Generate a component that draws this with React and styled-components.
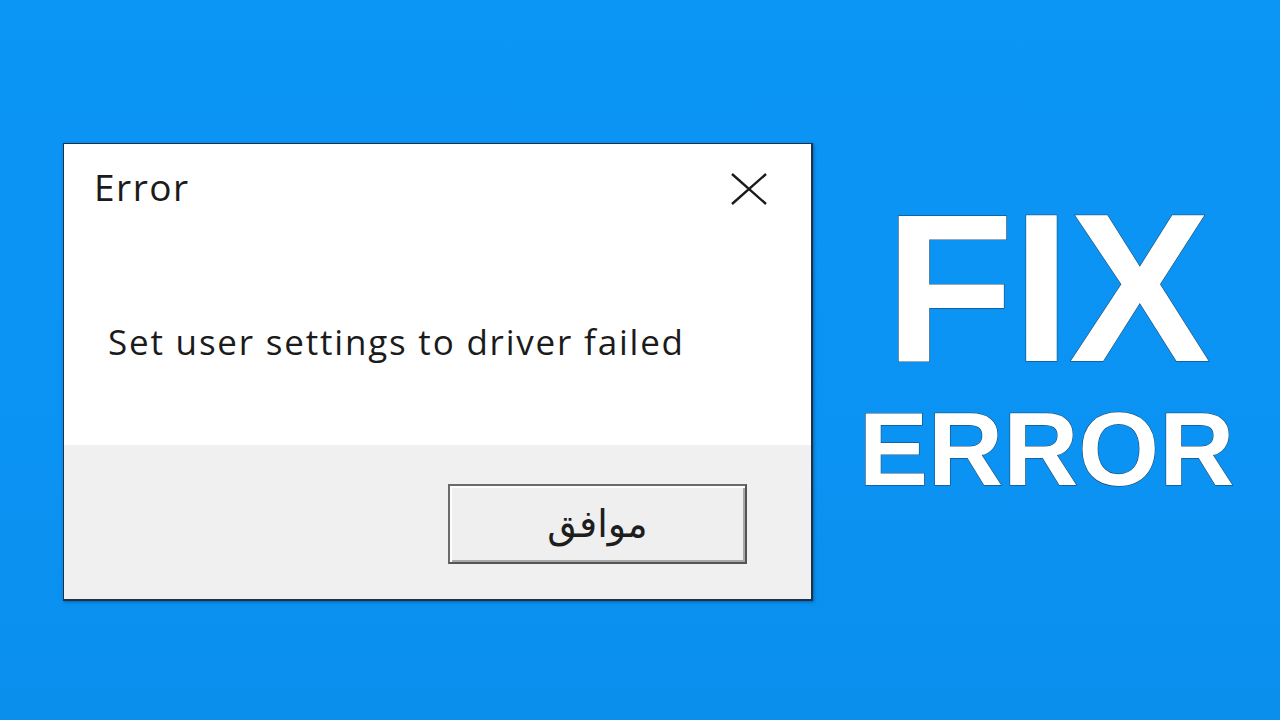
import React from 'react';
import styled, { createGlobalStyle } from 'styled-components';

const GlobalStyle = createGlobalStyle`
  html, body {
    margin: 0;
    padding: 0;
  }
  body {
    width: 1280px;
    height: 720px;
    overflow: hidden;
    background: linear-gradient(180deg, #0b95f5 0%, #0b93f3 60%, #0a8fed 100%);
  }
`;

const Page = styled.div`
  width: 1280px;
  height: 720px;
  display: flex;
  align-items: flex-start;
  padding: 143px 0 0 63px;
  box-sizing: border-box;
`;

const Dialog = styled.div`
  width: 750px;
  height: 458px;
  box-sizing: border-box;
  border: 1px solid #1f3346;
  border-right-width: 2px;
  border-bottom-width: 2px;
  display: flex;
  flex-direction: column;
  background: #fff;
  box-shadow: 1px 1px 3px rgba(0, 40, 90, 0.45);
  font-family: "Open Sans", "Noto Sans", sans-serif;
  color: #1b1b1b;
`;

const Content = styled.div`
  height: 301px;
  display: flex;
  flex-direction: column;
`;

const Header = styled.div`
  display: flex;
  justify-content: space-between;
  align-items: flex-start;
  padding: 24px 44px 0 30px;
`;

const Title = styled.div`
  font-size: 37px;
  line-height: 37px;
  letter-spacing: 1.5px;
`;

const CloseButton = styled.div`
  width: 36px;
  height: 32px;
  margin-top: 5px;
  display: flex;
`;

const Message = styled.div`
  margin-top: 119px;
  padding-left: 44px;
  font-size: 35px;
  line-height: 35px;
  letter-spacing: 1.8px;
`;

const Footer = styled.div`
  flex: 1;
  background: #f0f0f0;
  display: flex;
  justify-content: flex-end;
  align-items: flex-start;
  padding: 39px 64px 0 0;
`;

const Button = styled.div`
  width: 299px;
  height: 80px;
  box-sizing: border-box;
  border: 2px solid #6a6a6a;
  border-right-color: #555;
  border-bottom-color: #555;
  background: #efefef;
  box-shadow: inset 2px 2px 0 #fdfdfd, inset -2px -2px 0 #a8a8a8;
  display: flex;
  align-items: center;
  justify-content: center;
  font-family: "DejaVu Sans", "Noto Sans", sans-serif;
  font-size: 38px;
  color: #1e1e1e;
  direction: rtl;
`;

const Side = styled.div`
  flex: 1;
  display: flex;
  flex-direction: column;
  align-items: center;
  padding-top: 60px;
  font-family: "Liberation Sans", Arial, sans-serif;
  font-weight: 700;
  color: #fff;
  -webkit-text-stroke: 1px #1b3550;
  paint-order: stroke fill;
`;

const BigWord = styled.div`
  font-size: ${(p) => p.size}px;
  line-height: ${(p) => p.lh};
  letter-spacing: ${(p) => p.spacing || 0}px;
  margin-top: ${(p) => p.gap || 0}px;
`;

const CloseIcon = () => (
  <svg width="36" height="32" viewBox="0 0 36 32">
    <path d="M1 1 L35 31 M35 1 L1 31" stroke="#1a1a1a" strokeWidth="2.4" fill="none" />
  </svg>
);

export default function App() {
  return (
    <>
      <GlobalStyle />
      <Page>
        <Dialog>
          <Content>
            <Header>
              <Title>Error</Title>
              <CloseButton>
                <CloseIcon />
              </CloseButton>
            </Header>
            <Message>Set user settings to driver failed</Message>
          </Content>
          <Footer>
            <Button>موافق</Button>
          </Footer>
        </Dialog>
        <Side>
          <BigWord size={212} lh={0.8} spacing={-2}>FIX</BigWord>
          <BigWord size={104} lh={0.9} gap={30}>ERROR</BigWord>
        </Side>
      </Page>
    </>
  );
}
